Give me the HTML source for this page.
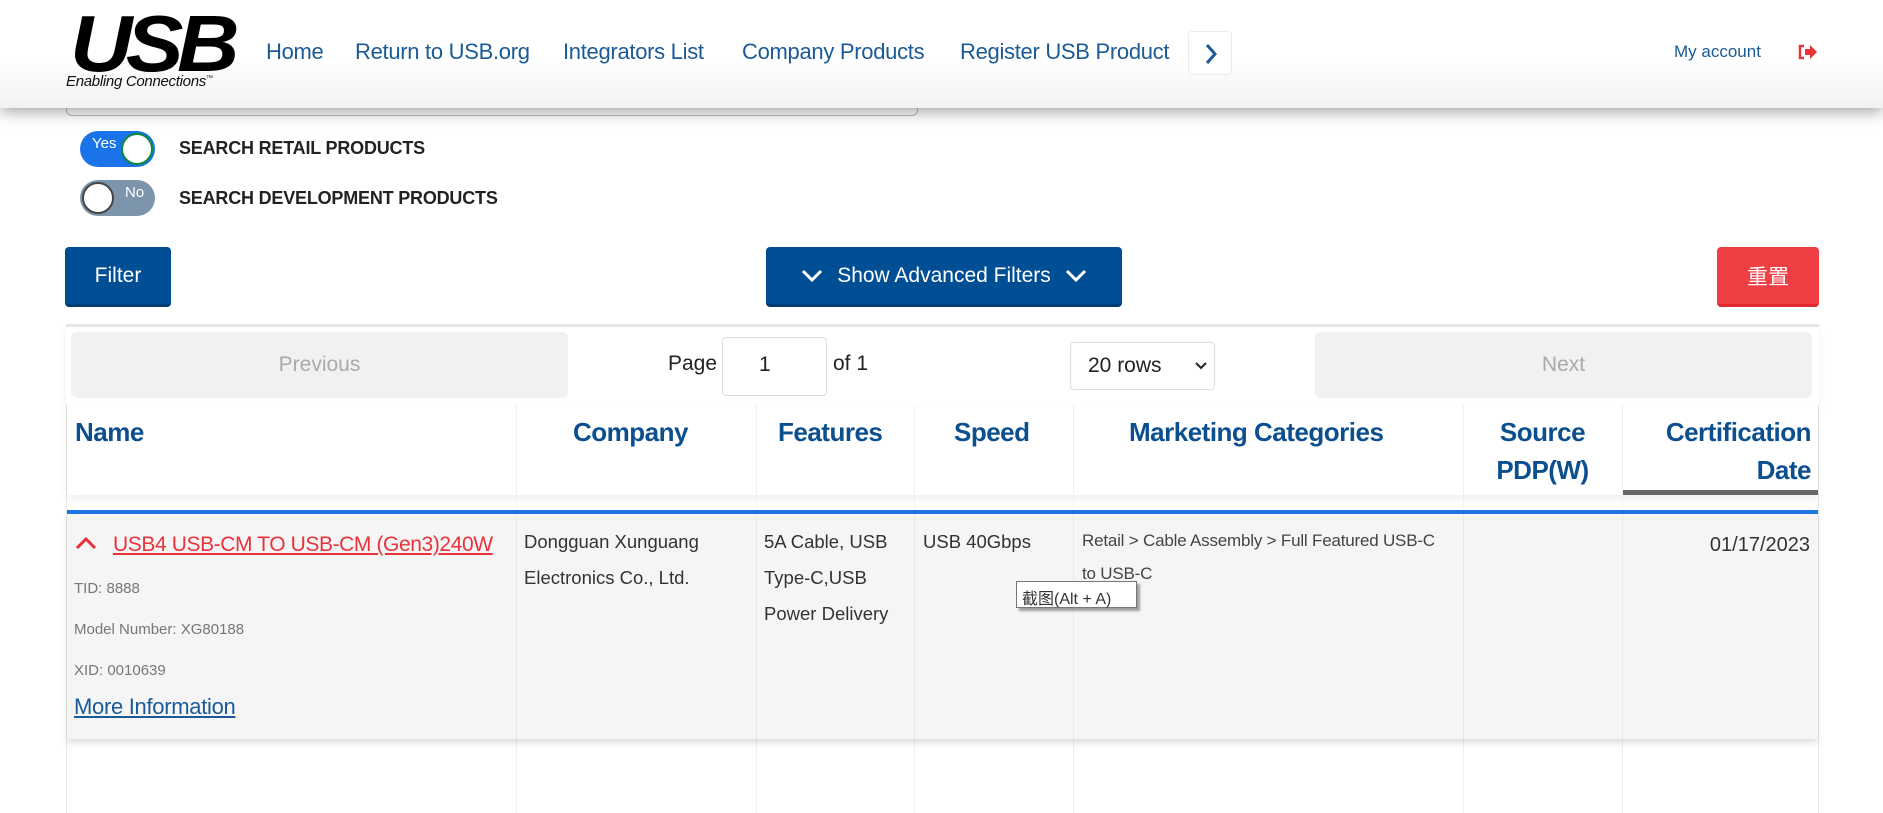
<!DOCTYPE html>
<html><head><meta charset="utf-8"><style>
*{box-sizing:border-box;margin:0;padding:0}
body{width:1883px;height:813px;overflow:hidden;background:#fff;font-family:"Liberation Sans","Noto Sans CJK SC",sans-serif;position:relative;color:#222}
.a{position:absolute;white-space:nowrap}
.hdr{position:absolute;left:0;top:0;width:1883px;height:108px;background:linear-gradient(#fff 55%,#f1f1f1);box-shadow:0 4px 14px rgba(0,0,0,.35);z-index:2}
.nav{font-size:22px;color:#1a5a96;top:39px;letter-spacing:-.3px}
.tog{position:absolute;width:75px;height:36px;border-radius:18px}
.knob{position:absolute;top:2px;width:32px;height:32px;border-radius:50%;background:#fff}
.lbl{font-weight:bold;font-size:18px;color:#222;letter-spacing:-.2px}
.btn{position:absolute;height:60px;background:#004f94;border-radius:4px;color:#fff;font-size:21px;display:flex;align-items:center;justify-content:center;border-bottom:3px solid #003d73}
.th{font-weight:bold;color:#0b4f8f;font-size:26px;letter-spacing:-.5px}
.vl{position:absolute;width:1px;background:#f0f0f0}
.cell{font-size:18.5px;color:#333}
</style></head><body>
<div class="hdr">
 <div class="a" style="left:70px;top:-2px;font-size:80px;font-weight:900;font-style:italic;letter-spacing:-6px;color:#000;transform:scaleX(1.08);transform-origin:left;font-family:'Liberation Sans',sans-serif">USB</div>
 <div class="a" style="left:66px;top:73px;font-size:15px;font-style:italic;color:#111;letter-spacing:-.3px">Enabling Connections<sup style="font-size:7px">™</sup></div>
 <div class="a nav" style="left:266px">Home</div>
 <div class="a nav" style="left:355px">Return to USB.org</div>
 <div class="a nav" style="left:563px">Integrators List</div>
 <div class="a nav" style="left:742px">Company Products</div>
 <div class="a nav" style="left:960px">Register USB Product</div>
 <div class="a" style="left:1188px;top:31px;width:44px;height:44px;border:1px solid #e3edf6;border-radius:4px;background:#fff"><svg width="44" height="44"><path d="M18 13 L26 22 L18 31" stroke="#1a5a96" stroke-width="3" fill="none"/></svg></div>
 <div class="a" style="left:1674px;top:42px;font-size:17px;color:#1a5a96">My account</div>
 <svg class="a" style="left:1798px;top:44px" width="20" height="16"><path d="M6 2H2v12h4" stroke="#e8333b" stroke-width="2.5" fill="none"/><path d="M7 5h5V1l7 7-7 7v-4H7z" fill="#e8333b"/></svg>
</div>
<div class="a" style="left:66px;top:100px;width:852px;height:16px;border:1px solid #bbb;border-top:none;border-radius:0 0 6px 6px"></div>

<div class="tog" style="left:80px;top:131px;background:#1a73e8"><div class="knob" style="left:41px;border:2px solid #0a8a3a"></div><span class="a" style="left:12px;top:4px;color:#fff;font-size:15px">Yes</span></div>
<div class="a lbl" style="left:179px;top:138px">SEARCH RETAIL PRODUCTS</div>
<div class="tog" style="left:80px;top:180px;background:#7c95ab"><div class="knob" style="left:2px;border:2px solid #444"></div><span class="a" style="left:45px;top:4px;color:#fff;font-size:15px">No</span></div>
<div class="a lbl" style="left:179px;top:188px">SEARCH DEVELOPMENT PRODUCTS</div>

<div class="btn" style="left:65px;top:247px;width:106px">Filter</div>
<div class="btn" style="left:766px;top:247px;width:356px"><svg width="22" height="16" style="margin-right:14px"><path d="M2 3l9 9 9-9" stroke="#fff" stroke-width="3" fill="none"/></svg>Show Advanced Filters<svg width="22" height="16" style="margin-left:14px"><path d="M2 3l9 9 9-9" stroke="#fff" stroke-width="3" fill="none"/></svg></div>
<div class="btn" style="left:1717px;top:247px;width:102px;background:#ef3e44;border-bottom-color:#e02a30">重置</div>

<div class="a" style="left:66px;top:324px;width:1753px;height:489px;border-left:1px solid #e6e6e6;border-right:1px solid #e6e6e6;border-top:3px solid #e8e8e8"></div>
<div class="a" style="left:66px;top:327px;width:1753px;height:78px;background:#fff;box-shadow:0 4px 10px rgba(0,0,0,.06)"></div>
<div class="a" style="left:71px;top:332px;width:497px;height:66px;background:#f1f1f1;border-radius:6px;color:#aaa;font-size:21px;display:flex;align-items:center;justify-content:center">Previous</div>
<div class="a" style="left:668px;top:352px;font-size:21px">Page</div>
<div class="a" style="left:722px;top:337px;width:105px;height:59px;border:1px solid #ddd;border-radius:4px;font-size:21px;padding:15px 0 0 36px">1</div>
<div class="a" style="left:833px;top:352px;font-size:21px">of 1</div>
<div class="a" style="left:1070px;top:342px;width:145px;height:48px;border:1px solid #ddd;border-radius:4px;font-size:21px;padding:11px 0 0 17px">20 rows<svg class="a" style="left:124px;top:19px" width="12" height="9"><path d="M1 1l5 5 5-5" stroke="#222" stroke-width="2" fill="none"/></svg></div>
<div class="a" style="left:1315px;top:332px;width:497px;height:66px;background:#f1f1f1;border-radius:6px;color:#aaa;font-size:21px;display:flex;align-items:center;justify-content:center">Next</div>

<div class="a" style="left:67px;top:405px;width:1751px;height:90px;background:#fff;box-shadow:0 5px 8px rgba(0,0,0,.06)"></div>
<div class="vl" style="left:516px;top:405px;height:408px"></div>
<div class="vl" style="left:756px;top:405px;height:408px"></div>
<div class="vl" style="left:914px;top:405px;height:408px"></div>
<div class="vl" style="left:1073px;top:405px;height:408px"></div>
<div class="vl" style="left:1463px;top:405px;height:408px"></div>
<div class="vl" style="left:1622px;top:405px;height:408px"></div>
<div class="a th" style="left:75px;top:417px">Name</div>
<div class="a th" style="left:573px;top:417px">Company</div>
<div class="a th" style="left:778px;top:417px">Features</div>
<div class="a th" style="left:954px;top:417px">Speed</div>
<div class="a th" style="left:1129px;top:417px">Marketing Categories</div>
<div class="a th" style="left:1463px;width:159px;top:413px;text-align:center;line-height:38px">Source<br>PDP(W)</div>
<div class="a th" style="left:1622px;width:189px;top:413px;text-align:right;line-height:38px">Certification<br>Date</div>
<div class="a" style="left:1623px;top:490px;width:195px;height:5px;background:#666"></div>

<div class="a" style="left:67px;top:510px;width:1751px;height:4px;background:#1f75e6"></div>
<div class="a" style="left:67px;top:514px;width:1751px;height:225px;background:#f5f5f5;box-shadow:0 4px 6px rgba(0,0,0,.12)"></div>
<div class="vl" style="left:516px;top:514px;height:225px;background:#e8e8e8"></div>
<div class="vl" style="left:756px;top:514px;height:225px;background:#e8e8e8"></div>
<div class="vl" style="left:914px;top:514px;height:225px;background:#e8e8e8"></div>
<div class="vl" style="left:1073px;top:514px;height:225px;background:#e8e8e8"></div>
<div class="vl" style="left:1463px;top:514px;height:225px;background:#e8e8e8"></div>
<div class="vl" style="left:1622px;top:514px;height:225px;background:#e8e8e8"></div>
<svg class="a" style="left:75px;top:536px" width="22" height="14"><path d="M2 12l9-9 9 9" stroke="#e53238" stroke-width="3" fill="none"/></svg>
<div class="a" style="left:113px;top:533px;font-size:21px;color:#e8333b;text-decoration:underline;letter-spacing:-.4px">USB4 USB-CM TO USB-CM (Gen3)240W</div>
<div class="a" style="left:74px;top:580px;font-size:15px;color:#777">TID: 8888</div>
<div class="a" style="left:74px;top:621px;font-size:15px;color:#777">Model Number: XG80188</div>
<div class="a" style="left:74px;top:662px;font-size:15px;color:#777">XID: 0010639</div>
<div class="a" style="left:74px;top:694px;font-size:22px;color:#1a5a96;text-decoration:underline;letter-spacing:-.3px">More Information</div>
<div class="a cell" style="left:524px;top:524px;line-height:36px">Dongguan Xunguang<br>Electronics Co., Ltd.</div>
<div class="a cell" style="left:764px;top:524px;line-height:36px">5A Cable, USB<br>Type-C,USB<br>Power Delivery</div>
<div class="a cell" style="left:923px;top:531px">USB 40Gbps</div>
<div class="a" style="left:1082px;top:524px;font-size:17px;color:#444;line-height:33px;letter-spacing:-.2px">Retail &gt; Cable Assembly &gt; Full Featured USB-C<br>to USB-C</div>
<div class="a" style="left:1622px;width:188px;top:534px;font-size:20px;text-align:right;color:#333">01/17/2023</div>
<div class="a" style="left:1016px;top:581px;width:121px;height:27px;background:#fff;border:1px solid #777;box-shadow:3px 3px 2px rgba(0,0,0,.35);font-size:16px;padding:3px 0 0 5px;color:#333">截图(Alt + A)</div>
</body></html>
